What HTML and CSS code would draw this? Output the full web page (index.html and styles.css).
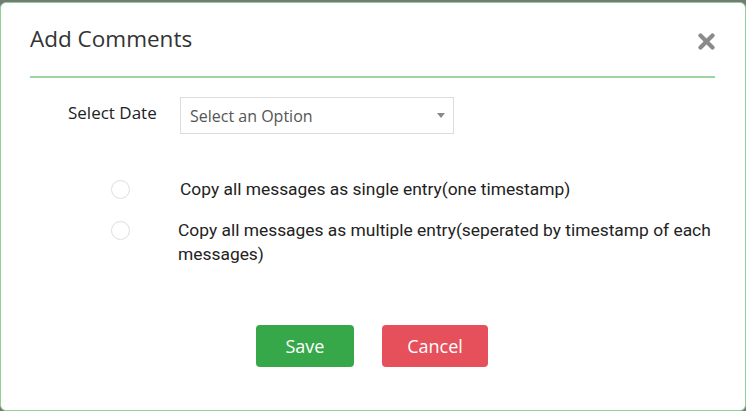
FILE: index.html
```html
<!DOCTYPE html>
<html lang="en">
<head>
  <meta charset="UTF-8" />
  <meta name="viewport" content="width=device-width, initial-scale=1.0"/>
  <title>Add Comments</title>
  <link rel="stylesheet" href="styles.css">
</head>
<body>
  <div class="modal">
    <div class="modal-header">
      <h2 class="modal-title">Add Comments</h2>
      <button class="close" aria-label="Close">
        <svg width="17" height="17" viewBox="0 0 17 17"><path d="M2.5 2.5 L14.5 14.5 M14.5 2.5 L2.5 14.5" stroke="#8a8a8a" stroke-width="4.2" stroke-linecap="round"/></svg>
      </button>
    </div>

    <div class="field">
      <label class="field-label">Select Date</label>
      <div class="select">
        <span>Select an Option</span>
        <span class="caret"></span>
      </div>
    </div>

    <div class="options">
      <label class="option">
        <span class="radio"></span>
        <span class="option-text first">Copy all messages as single entry(one timestamp)</span>
      </label>
      <label class="option">
        <span class="radio"></span>
        <span class="option-text">Copy all messages as multiple entry(seperated by timestamp of each messages)</span>
      </label>
    </div>

    <div class="actions">
      <button class="btn save">Save</button>
      <button class="btn cancel">Cancel</button>
    </div>
  </div>
</body>
</html>
```

FILE: styles.css
```css
body {
  margin: 0;
  height: 411px;
  background: #727a74;
  font-family: 'Open Sans', 'Noto Sans', sans-serif;
  overflow: hidden;
}

.modal {
  margin-top: 2px;
  height: 407px;
  background: #ffffff;
  border: 1px solid #8fcf98;
  border-radius: 6px;
  overflow: hidden;
}

.modal-header {
  display: flex;
  align-items: center;
  justify-content: space-between;
  margin: 0 30px 0 29px;
  height: 73px;
  border-bottom: 2px solid #9cd4a3;
}

.modal-title {
  margin: 0 0 2px 0;
  font-size: 22.5px;
  font-weight: 400;
  color: #333;
}

.close {
  border: none;
  background: none;
  padding: 0;
  margin-top: 4px;
  cursor: pointer;
  display: flex;
}

.field {
  display: flex;
  align-items: center;
  margin-top: 19px;
  padding-left: 67px;
}

.field-label {
  width: 112px;
  font-size: 17px;
  color: #222;
  margin-top: -6px;
}

.select {
  display: flex;
  align-items: center;
  justify-content: space-between;
  width: 255px;
  height: 35px;
  padding: 0 8px 0 9px;
  border: 1px solid #dcdcdc;
  font-size: 16px;
  color: #555;
}

.caret {
  width: 0;
  height: 0;
  border-left: 4px solid transparent;
  border-right: 4px solid transparent;
  border-top: 5px solid #888;
}

.options {
  display: flex;
  flex-direction: column;
  gap: 17px;
  margin-top: 43px;
  padding-left: 110px;
  font-family: Roboto, 'Noto Sans', sans-serif;
}

.option {
  display: flex;
  align-items: flex-start;
  font-size: 17.4px;
  line-height: 24px;
  color: #222;
}

.radio {
  flex: none;
  width: 17px;
  height: 17px;
  margin-top: 3px;
  border: 1px solid #dedede;
  border-radius: 50%;
}

.option-text {
  margin-left: 48px;
  padding-right: 20px;
}

.option-text.first {
  margin-left: 50px;
}

.actions {
  display: flex;
  gap: 28px;
  margin-top: 59px;
  padding-left: 255px;
}

.btn {
  height: 42px;
  border: none;
  border-radius: 4px;
  color: #fff;
  font-family: 'Open Sans', 'Noto Sans', sans-serif;
  font-size: 18px;
  cursor: pointer;
}

.save {
  width: 98px;
  background: #37a84a;
}

.cancel {
  width: 106px;
  background: #e5505a;
}
```
